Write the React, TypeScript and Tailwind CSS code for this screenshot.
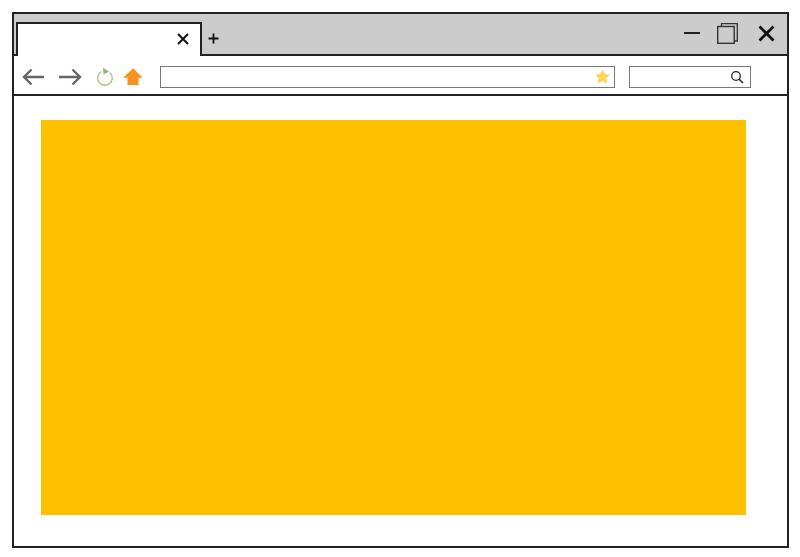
const App = () => {
  return (
    <div className="w-[800px] h-[557px] bg-white pt-3 pl-3 overflow-hidden">
      <div className="w-[777px] h-[536px] border-2 border-[#222] flex flex-col">
        {/* title bar with tab */}
        <div className="h-[42px] shrink-0 bg-[#cccccc] border-b-2 border-[#222] flex items-end">
          <div className="ml-[2px] -mb-[2px] w-[186px] h-[34px] bg-white border-2 border-b-0 border-[#222] flex items-center justify-end pr-[11px]">
            <svg width="12" height="12" viewBox="0 0 12 12" className="mb-[2px]">
              <path d="M1 1 L11 11 M11 1 L1 11" stroke="#111" strokeWidth="2" />
            </svg>
          </div>
          <div className="ml-[6px] mb-[10px]">
            <svg width="11" height="11" viewBox="0 0 11 11">
              <path d="M5.5 0.5 V10.5 M0.5 5.5 H10.5" stroke="#111" strokeWidth="1.8" />
            </svg>
          </div>
          <div className="ml-auto flex items-center h-full pr-[12px]">
            <div className="w-[16px] h-[2px] bg-[#222] mr-[17px] mt-[-2px]" />
            <svg width="21" height="21" viewBox="0 0 21 21" className="mr-[20px] mt-[-1px]">
              <path d="M4.5 3 V0.7 H20.3 V18 H17.5" fill="none" stroke="#333" strokeWidth="1.3" />
              <rect x="0.7" y="3.5" width="16.5" height="16.8" fill="none" stroke="#333" strokeWidth="1.4" />
            </svg>
            <svg width="17" height="17" viewBox="0 0 17 17" className="mt-[-2px]">
              <path d="M1.5 1.5 L15.5 15.5 M15.5 1.5 L1.5 15.5" stroke="#111" strokeWidth="2.8" />
            </svg>
          </div>
        </div>
        {/* toolbar */}
        <div className="h-[40px] shrink-0 border-b-2 border-[#222] flex items-center pl-[8px] pt-[3px]">
          <svg width="23" height="18" viewBox="0 0 23 18">
            <path d="M22 9 H2 M9.5 1.5 L2 9 L9.5 16.5" fill="none" stroke="#666" strokeWidth="2.4" />
          </svg>
          <svg width="23" height="18" viewBox="0 0 23 18" className="ml-[14px]">
            <path d="M0 9 H21 M13.5 1.5 L21 9 L13.5 16.5" fill="none" stroke="#666" strokeWidth="2.4" />
          </svg>
          <svg width="18" height="20" viewBox="0 0 18 20" className="ml-[14px]">
            <path d="M14.2 5.9 A7.3 7.3 0 1 1 5.6 4.5" fill="none" stroke="#a3c585" strokeWidth="1.4" />
            <path d="M7 0.8 L13 4.5 L7.5 7.5 Z" fill="#8db870" />
          </svg>
          <svg width="20" height="18" viewBox="0 0 20 18" className="ml-[9px]">
            <path d="M10 0.3 L19.8 9.8 H15.5 V17 H4.5 V9.8 H0.2 Z" fill="#f7931e" />
          </svg>
          <div className="ml-[17px] w-[455px] h-[22px] border border-[#777] bg-white flex items-center justify-end pr-[4px]">
            <svg width="15" height="15" viewBox="0 0 24 24">
              <path
                d="M12 2 L15.4 8.6 L22.5 9.8 L17.4 14.9 L18.6 22 L12 18.6 L5.4 22 L6.6 14.9 L1.5 9.8 L8.6 8.6 Z"
                fill="#fcd757"
                stroke="#fcd757"
                strokeWidth="1.5"
                strokeLinejoin="round"
              />
            </svg>
          </div>
          <div className="ml-[14px] w-[122px] h-[22px] border border-[#777] bg-white flex items-center justify-end pr-[6px]">
            <svg width="14" height="14" viewBox="0 0 14 14">
              <circle cx="6" cy="6" r="4.3" fill="none" stroke="#222" strokeWidth="1.3" />
              <path d="M9.2 9.2 L13 13" stroke="#222" strokeWidth="1.5" />
            </svg>
          </div>
        </div>
        {/* page */}
        <div className="flex-1 pt-[24px] pl-[27px]">
          <div className="w-[705px] h-[395px] bg-[#ffc000]" />
        </div>
      </div>
    </div>
  );
};

export default App;
